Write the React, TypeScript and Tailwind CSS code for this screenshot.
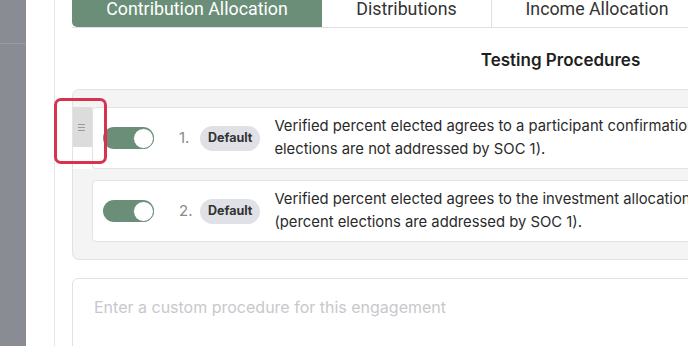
import React from "react";

const procedures = [
  {
    id: 1,
    lines: ["Verified percent elected agrees to a participant confirmation (percent", "elections are not addressed by SOC 1)."],
    dragging: true,
  },
  {
    id: 2,
    lines: ["Verified percent elected agrees to the investment allocation report", "(percent elections are addressed by SOC 1)."],
    dragging: false,
  },
];

const Toggle = () => (
  <div className="w-[51px] h-[22px] rounded-full bg-[#6a8e78] flex items-center justify-end shrink-0">
    <div className="w-[21px] h-[21px] rounded-full bg-white border-[1.5px] border-[#6a8e78]" />
  </div>
);

const ProcedureCard = ({ item }: { item: (typeof procedures)[number] }) => (
  <div className="relative ml-[19px]">
    {item.dragging && (
      <div className="absolute left-[-19px] top-0 bottom-0 w-[19px] bg-white">
        <div className="h-[40px] bg-[#dcdcdc] flex items-center justify-start pl-[5px]">
          <div className="flex flex-col gap-[2px]">
            <div className="w-[7px] h-px bg-[#9a9a9a]" />
            <div className="w-[7px] h-px bg-[#9a9a9a]" />
            <div className="w-[7px] h-px bg-[#9a9a9a]" />
          </div>
        </div>
      </div>
    )}
    <div className="bg-white border border-[#e2e2e2] rounded-[4px] flex items-center py-[7px] pl-[10px]">
      <Toggle />
      <span className="ml-[25px] w-[21px] text-[15px] text-[#8a8a8a]">{item.id}.</span>
      <span className="h-[25px] px-[8px] rounded-full bg-[#dfe1e6] text-[12.5px] font-bold text-[#333] flex items-center">
        Default
      </span>
      <p className="ml-[14px] text-[14.8px] leading-[23px] text-[#2a2a2a] whitespace-nowrap">
        {item.lines[0]}
        <br />
        {item.lines[1]}
      </p>
    </div>
  </div>
);

export default function App() {
  return (
    <div className="relative w-[688px] h-[346px] overflow-hidden flex bg-white" style={{ fontFamily: "Inter, 'Noto Sans', sans-serif" }}>
      <div className="w-[26px] shrink-0 bg-[#8a8c94]">
        <div className="h-[44px] border-b border-[#979aa1]" />
      </div>
      <div className="w-[28px] shrink-0 bg-white" />
      <div className="w-[1012px] shrink-0 border-l border-[#e4e4e4] px-[17px]">
        <div className="-mt-[9px] flex border-b border-[#e0e0e0]" style={{ fontFamily: "Roboto, sans-serif" }}>
          <div className="w-[250px] h-[36px] bg-[#6b8e79] rounded-bl-[5px] flex items-center justify-center text-[17.8px] text-white">
            Contribution Allocation
          </div>
          <div className="w-[170px] h-[36px] border-r border-[#e0e0e0] flex items-center justify-center text-[17.8px] text-[#333]">
            Distributions
          </div>
          <div className="w-[210px] h-[36px] flex items-center justify-center text-[17.8px] text-[#333]">
            Income Allocation
          </div>
        </div>
        <h2 className="mt-[20px] h-[24px] text-center text-[17px] leading-[24px] font-semibold text-[#1f1f1f]">
          Testing Procedures
        </h2>
        <div className="mt-[17px] bg-[#f4f4f4] border border-[#e2e2e2] rounded-[7px] pt-[17px] pb-[17px] pr-[18px] flex flex-col gap-[11px]">
          {procedures.map((p) => (
            <ProcedureCard key={p.id} item={p} />
          ))}
        </div>
        <textarea
          className="mt-[18px] w-full h-[120px] border border-[#e2e2e2] rounded-[6px] px-[21px] py-[16px] text-[16px] leading-[24px] resize-none outline-none placeholder:text-[#c8c8cc]"
          placeholder="Enter a custom procedure for this engagement"
        />
      </div>
      <div className="absolute left-[54px] top-[98px] w-[53px] h-[66px] border-[3px] border-[#d8324e] rounded-[7px]" />
    </div>
  );
}
